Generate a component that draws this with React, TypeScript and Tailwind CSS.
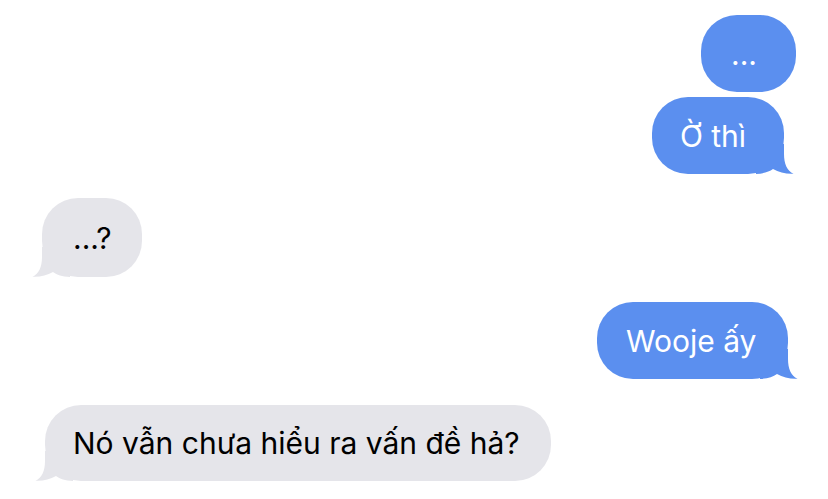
import React from "react";

const BLUE = "#5b8fef";
const GRAY = "#e5e5ea";

function Tail({ color, side }: { color: string; side: "left" | "right" }) {
  return (
    <svg
      width="40"
      height="30"
      viewBox="0 0 40 30"
      className={
        side === "right"
          ? "absolute bottom-0 right-[-12px]"
          : "absolute bottom-0 left-[-12px] scale-x-[-1]"
      }
    >
      <path
        d="M0 0 H28 V10 C28 20 31 26.5 37.5 29.8 C30 30.2 23 28.5 17 25 C13 27.8 8 29.6 0 30 Z"
        fill={color}
      />
    </svg>
  );
}

function Bubble({
  text,
  side,
  tail,
  className,
}: {
  text: string;
  side: "left" | "right";
  tail: boolean;
  className: string;
}) {
  const color = side === "right" ? BLUE : GRAY;
  return (
    <div
      className={`relative flex items-center rounded-[36px] ${
        side === "right" ? "bg-[#5b8fef] text-white" : "bg-[#e5e5ea] text-black"
      } ${className}`}
    >
      <span className="relative z-10 whitespace-nowrap text-[30px] leading-none">{text}</span>
      {tail && <Tail color={color} side={side} />}
    </div>
  );
}

export default function App() {
  return (
    <div
      className="flex h-[499px] w-[828px] flex-col overflow-hidden bg-white"
      style={{ fontFamily: "Inter, 'Noto Sans', sans-serif" }}
    >
      <Bubble text="..." side="right" tail={false} className="mt-[15px] mr-[32px] h-[77px] w-[95px] self-end pl-[30px]" />
      <Bubble text="Ờ thì" side="right" tail className="mt-[5px] mr-[44px] h-[77px] w-[132px] self-end pl-[28px]" />
      <Bubble text="...?" side="left" tail className="mt-[24px] ml-[42px] h-[79px] w-[100px] self-start pl-[31px]" />
      <Bubble text="Wooje ấy" side="right" tail className="mt-[25px] mr-[40px] h-[77px] w-[191px] self-end pl-[29px]" />
      <Bubble text="Nó vẫn chưa hiểu ra vấn đề hả?" side="left" tail className="mt-[26px] ml-[45px] h-[76px] w-[506px] self-start pl-[28px]" />
    </div>
  );
}
